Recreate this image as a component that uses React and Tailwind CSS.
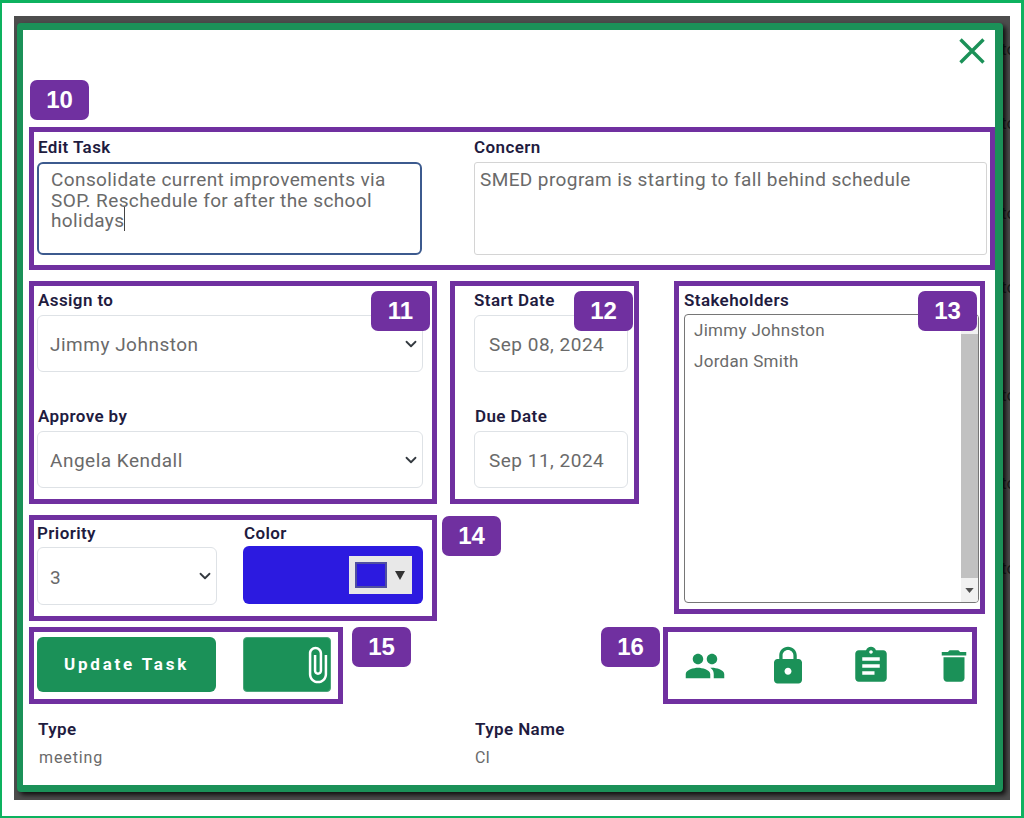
import React from 'react';

const font = { fontFamily: 'Roboto, sans-serif' };

const Badge = ({ children, className }) => (
  <div className={`absolute z-10 w-[59px] h-[40px] rounded-[7px] bg-[#7030a0] text-white text-[24px] font-semibold flex items-center justify-center font-['Liberation_Sans',sans-serif] ${className}`}>
    {children}
  </div>
);

const Label = ({ children, className = '' }) => (
  <div className={`text-[17px] font-semibold text-[#1f1c3f] tracking-[0.4px] leading-[20px] ${className}`}>
    {children}
  </div>
);

const Chevron = ({ className }) => (
  <svg viewBox="0 0 16 16" className={`absolute pointer-events-none w-[12px] h-[12px] ${className}`} fill="none">
    <path d="M2 5l6 6 6-6" stroke="#343a40" strokeWidth="2.4" strokeLinecap="round" strokeLinejoin="round" />
  </svg>
);

const SelectBox = ({ value, options, className }) => (
  <div className={`relative ${className}`}>
    <select
      defaultValue={value}
      className="appearance-none w-full h-full bg-white border border-[#dee2e6] rounded-[6px] pl-[12px] pt-[4px] text-[19px] text-[#6a6a6a] tracking-[0.5px] outline-none"
    >
      {options.map(opt => (
        <option key={opt}>{opt}</option>
      ))}
    </select>
    <Chevron className="right-[6px] top-1/2 -translate-y-1/2" />
  </div>
);

const DateBox = ({ value }) => (
  <input
    defaultValue={value}
    className="w-[154px] h-[57px] border border-[#dee2e6] rounded-[6px] pl-[14px] pt-[2px] text-[19px] text-[#6a6a6a] tracking-[0.5px] outline-none"
  />
);

const GreenIcon = ({ d }) => (
  <svg viewBox="0 0 24 24" className="w-[42px] h-[42px] shrink-0" fill="#1b9158">
    <path d={d} />
  </svg>
);

const icons = [
  'M16 11c1.66 0 2.99-1.34 2.99-3S17.66 5 16 5c-1.66 0-3 1.34-3 3s1.34 3 3 3zm-8 0c1.66 0 2.99-1.34 2.99-3S9.66 5 8 5C6.34 5 5 6.34 5 8s1.34 3 3 3zm0 2c-2.33 0-7 1.17-7 3.5V19h14v-2.5c0-2.33-4.67-3.5-7-3.5zm8 0c-.29 0-.62.02-.97.05 1.16.84 1.97 1.97 1.97 3.45V19h6v-2.5c0-2.33-4.67-3.5-7-3.5z',
  'M18 8h-1V6c0-2.76-2.24-5-5-5S7 3.24 7 6v2H6c-1.1 0-2 .9-2 2v10c0 1.1.9 2 2 2h12c1.1 0 2-.9 2-2V10c0-1.1-.9-2-2-2zm-6 9c-1.1 0-2-.9-2-2s.9-2 2-2 2 .9 2 2-.9 2-2 2zm3.1-9H8.9V6c0-1.71 1.39-3.1 3.1-3.1 1.71 0 3.1 1.39 3.1 3.1v2z',
  'M19 3h-4.18C14.4 1.84 13.3 1 12 1c-1.3 0-2.4.84-2.82 2H5c-1.1 0-2 .9-2 2v14c0 1.1.9 2 2 2h14c1.1 0 2-.9 2-2V5c0-1.1-.9-2-2-2zm-7 0c.55 0 1 .45 1 1s-.45 1-1 1-1-.45-1-1 .45-1 1-1zm2 14H7v-2h7v2zm3-4H7v-2h10v2zm0-4H7V7h10v2z',
  'M6 19c0 1.1.9 2 2 2h8c1.1 0 2-.9 2-2V7H6v12zM19 4h-3.5l-1-1h-5l-1 1H5v2h14V4z',
];

const people = ['Jimmy Johnston', 'Angela Kendall', 'Jordan Smith'];

export default function App() {
  return (
    <div style={font} className="w-[1024px] h-[818px] overflow-hidden bg-white border-[#0db25f] border-t-[3px] border-r-[3px] border-l-2 border-b-2 pl-[12px] pt-[13px]">
      {/* dimmed page behind the modal */}
      <div className="relative w-[996px] h-[784px] overflow-hidden bg-[#4d4d4d] pl-[3px] pt-[7px]">
        {[23, 97, 187, 261, 369, 457, 542].map(top => (
          <span key={top} className="absolute left-[987px] text-[17px] leading-[20px] text-[#1e1e1e]" style={{ top }}>
            to
          </span>
        ))}

        <div className="relative w-[986px] h-[769px] bg-white rounded-[4px] border-[#1b9158] border-t-[7px] border-l-[6px] border-r-[8px] border-b-[7px] shadow-[3px_3px_5px_rgba(0,0,0,0.8)] pl-[6px]">
          <div className="h-[97px] flex justify-end pt-[8px] pr-[10px]">
            <svg viewBox="0 0 26 26" className="w-[26px] h-[26px]" fill="none">
              <path d="M1.5 1.5l23 23M24.5 1.5l-23 23" stroke="#1b9158" strokeWidth="3.4" />
            </svg>
          </div>

          <Badge className="left-[7px] top-[50px]">10</Badge>

          {/* section 10 */}
          <div className="w-[966px] h-[143px] border-[5px] border-[#7030a0] pl-[3px] flex">
            <div className="w-[385px]">
              <Label className="h-[30px] pt-[5px] pl-[1px]">Edit Task</Label>
              <div className="relative">
                <textarea
                  defaultValue={'Consolidate current improvements via SOP. Reschedule for after the school holidays'}
                  className="block w-full h-[93px] resize-none border-2 border-[#3c5a8e] rounded-[6px] pl-[12px] pt-[6px] text-[19px] leading-[20.5px] text-[#6a6a6a] tracking-[0.4px] outline-none"
                />
                {/* text caret */}
                <div className="absolute left-[87px] top-[45px] w-px h-[24px] bg-[#444444]" />
              </div>
            </div>
            <div className="w-[513px] ml-[52px]">
              <Label className="h-[30px] pt-[5px]">Concern</Label>
              <textarea
                defaultValue="SMED program is starting to fall behind schedule"
                className="block w-full h-[93px] resize-none border border-[#d4d4d4] rounded-[3px] pl-[5px] pt-[6px] text-[19px] leading-[22px] text-[#6a6a6a] tracking-[0.4px] outline-none"
              />
            </div>
          </div>

          <div className="flex items-start mt-[11px]">
            <div className="w-[408px]">
              {/* section 11 */}
              <div className="relative h-[223px] border-[5px] border-[#7030a0] pl-[3px]">
                <Badge className="left-[337px] top-[5px]">11</Badge>
                <Label className="h-[29px] pt-[4px] pl-[1px]">Assign to</Label>
                <SelectBox value="Jimmy Johnston" options={people} className="w-[386px] h-[57px]" />
                <Label className="h-[25px] mt-[34px] pl-[1px]">Approve by</Label>
                <SelectBox value="Angela Kendall" options={people} className="w-[386px] h-[57px]" />
              </div>

              {/* section 14 */}
              <div className="relative h-[106px] mt-[11px] border-[5px] border-[#7030a0] pl-[3px] flex">
                <Badge className="left-[408px] top-[-4px]">14</Badge>
                <div className="w-[180px]">
                  <Label className="h-[27px] pt-[3px]">Priority</Label>
                  <SelectBox value="3" options={['1', '2', '3', '4', '5']} className="w-[180px] h-[58px]" />
                </div>
                <div className="w-[180px] ml-[26px]">
                  <Label className="h-[26px] pt-[3px] pl-[1px]">Color</Label>
                  <div className="h-[58px] bg-[#2c1ae0] rounded-[6px] flex items-center justify-end pr-[11px]">
                    <div className="w-[63px] h-[38px] bg-[#e8e8e8] flex items-center pl-[6px]">
                      <div className="w-[32px] h-[26px] bg-[#2c1ae0] border-2 border-[#5050a0]" />
                      <svg viewBox="0 0 10 10" className="w-[10px] h-[10px] ml-[8px]" fill="#333">
                        <path d="M0 1h10L5 10z" />
                      </svg>
                    </div>
                  </div>
                </div>
              </div>
            </div>

            {/* section 12 */}
            <div className="relative w-[189px] h-[223px] ml-[13px] border-[5px] border-[#7030a0] pl-[19px]">
              <Badge className="left-[119px] top-[5px]">12</Badge>
              <Label className="h-[29px] pt-[4px]">Start Date</Label>
              <DateBox value="Sep 08, 2024" />
              <Label className="h-[25px] mt-[34px] pl-[1px]">Due Date</Label>
              <DateBox value="Sep 11, 2024" />
            </div>

            {/* section 13 */}
            <div className="relative w-[311px] h-[333px] ml-[35px] border-[5px] border-[#7030a0] pl-[5px]">
              <Badge className="left-[239px] top-[5px]">13</Badge>
              <Label className="h-[28px] pt-[4px]">Stakeholders</Label>
              <div className="w-[295px] h-[289px] border border-[#767676] rounded-[4px] flex overflow-hidden">
                <div className="flex-1 pl-[9px] pt-[5px] text-[17px] tracking-[0.3px] text-[#6a6a6a]">
                  <div className="h-[31px] leading-[20px]">Jimmy Johnston</div>
                  <div className="leading-[20px]">Jordan Smith</div>
                </div>
                <div className="w-[17px] bg-[#f1f1f1] flex flex-col items-center">
                  <div className="h-[19px] w-full" />
                  <div className="h-[244px] w-full bg-[#c1c1c1]" />
                  <div className="flex-1 flex items-center">
                    <svg viewBox="0 0 10 6" className="w-[9px] h-[5px]" fill="#505050">
                      <path d="M0 0h10L5 6z" />
                    </svg>
                  </div>
                </div>
              </div>
            </div>
          </div>

          <div className="flex items-start mt-[-1px]">
            {/* section 15 */}
            <div className="relative w-[314px] h-[77px] mt-[7px] border-[5px] border-[#7030a0] pl-[3px] pt-[5px] flex">
              <Badge className="left-[318px] top-[-5px]">15</Badge>
              <button className="w-[179px] h-[55px] bg-[#1b9158] rounded-[6px] text-white text-[17px] font-bold tracking-[2.8px]">
                Update Task
              </button>
              <div className="w-[88px] h-[55px] ml-[27px] bg-[#1b9158] border border-[#4aa67a] rounded-[4px] flex items-center justify-end pr-[1px]">
                <svg viewBox="6 0 13 24" className="w-[22px] h-[40px]" fill="#ffffff">
                  <path d="M16.5 6v11.5c0 2.21-1.79 4-4 4s-4-1.79-4-4V5c0-1.38 1.12-2.5 2.5-2.5s2.5 1.12 2.5 2.5v10.5c0 .55-.45 1-1 1s-1-.45-1-1V6H10v9.5c0 1.38 1.12 2.5 2.5 2.5s2.5-1.12 2.5-2.5V5c0-2.21-1.79-4-4-4S7 2.79 7 5v12.5c0 3.04 2.46 5.5 5.5 5.5s5.5-2.46 5.5-5.5V6h-1.5z" />
                </svg>
              </div>
            </div>

            {/* section 16 */}
            <div className="relative w-[314px] h-[77px] mt-[7px] ml-[320px] border-[5px] border-[#7030a0] pl-[16px] flex items-center gap-[41px]">
              <Badge className="left-[-67px] top-[-5px]">16</Badge>
              {icons.map(d => (
                <GreenIcon key={d} d={d} />
              ))}
            </div>
          </div>

          <div className="flex pl-[9px] mt-[15px]">
            <div className="w-[437px]">
              <Label>Type</Label>
              <div className="mt-[9px] pl-[1px] text-[16px] leading-[20px] text-[#6a6a6a] tracking-[0.9px]">meeting</div>
            </div>
            <div>
              <Label>Type Name</Label>
              <div className="mt-[9px] text-[16px] leading-[20px] text-[#6a6a6a]">CI</div>
            </div>
          </div>
        </div>
      </div>
    </div>
  );
}
